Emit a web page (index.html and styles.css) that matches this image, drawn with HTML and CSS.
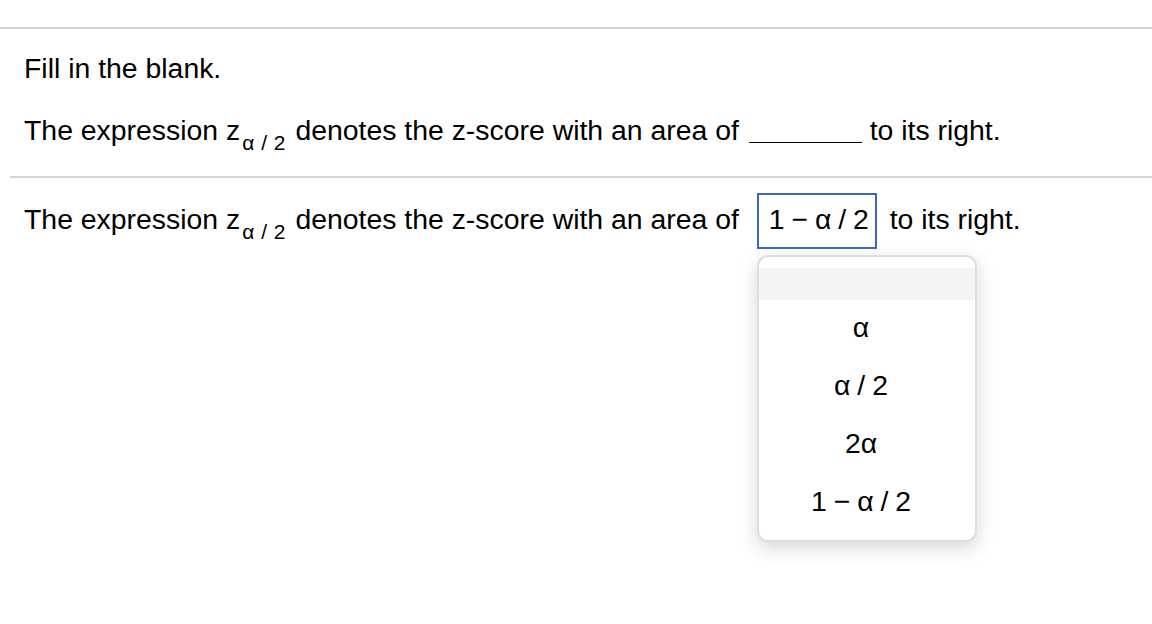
FILE: index.html
```html
<!DOCTYPE html>
<html lang="en">
<head>
<meta charset="utf-8">
<title>Fill in the blank</title>
<link rel="stylesheet" href="styles.css">
</head>
<body>
<div class="page">
  <div class="inner">
    <section class="question">
      <div class="instr">Fill in the blank.</div>
      <div class="stmt">The expression z<span class="sub">α / 2</span> denotes the z-score with an area of <span class="blank"></span> to its right.</div>
    </section>
    <section class="answer">
      <div class="stmt">The expression z<span class="sub">α / 2</span> denotes the z-score with an area of <span class="box">1 − α / 2</span> to its right.</div>
      <div class="menu">
        <div class="item empty"></div>
        <div class="item">α</div>
        <div class="item">α / 2</div>
        <div class="item">2α</div>
        <div class="item">1 − α / 2</div>
      </div>
    </section>
  </div>
</div>
</body>
</html>
```

FILE: styles.css
```css
html, body {
  margin: 0;
  padding: 0;
  background: #ffffff;
}

body {
  font-family: "Liberation Sans", Arial, Helvetica, sans-serif;
  font-size: 28.4px;
  color: #000;
}

.page {
  box-sizing: border-box;
  min-height: 624px;
  padding-top: 27px;
}

.inner {
  border-top: 2px solid #d3d6df;
  padding-left: 10px;
}

.instr,
.stmt {
  line-height: 32px;
}

.question {
  padding: 23px 0 30px 14px;
  border-bottom: 2px solid #d3d6df;
}

.instr {
  margin-bottom: 30px;
}

.sub {
  font-size: 21px;
  line-height: 0;
  vertical-align: -10px;
  margin: 0 2px 0 2px;
  word-spacing: 1px;
}

.blank {
  display: inline-block;
  width: 113px;
  height: 0;
  margin-left: 2px;
  border-bottom: 1.5px solid #000;
  vertical-align: -3px;
}

.answer {
  padding: 15px 0 0 14px;
}

.box {
  display: inline-block;
  margin: 0 5px 0 10px;
  border: 2px solid #3d67c4;
  padding: 8px 6px 12px 10px;
  line-height: 32px;
  word-spacing: -1px;
}

.menu {
  box-sizing: border-box;
  width: 220px;
  margin: 6px 0 0 733px;
  padding: 11px 0 8px 0;
  background: #fff;
  border: 2px solid #dedede;
  border-radius: 11px;
  box-shadow: 0 6px 18px rgba(0, 0, 0, 0.16);
}

.item {
  padding: 14px 12px 18px 0;
  line-height: 26px;
  text-align: center;
  white-space: nowrap;
  word-spacing: -1px;
}

.item.empty {
  height: 0;
  padding: 16px 0;
  background: #f4f4f4;
}
```
